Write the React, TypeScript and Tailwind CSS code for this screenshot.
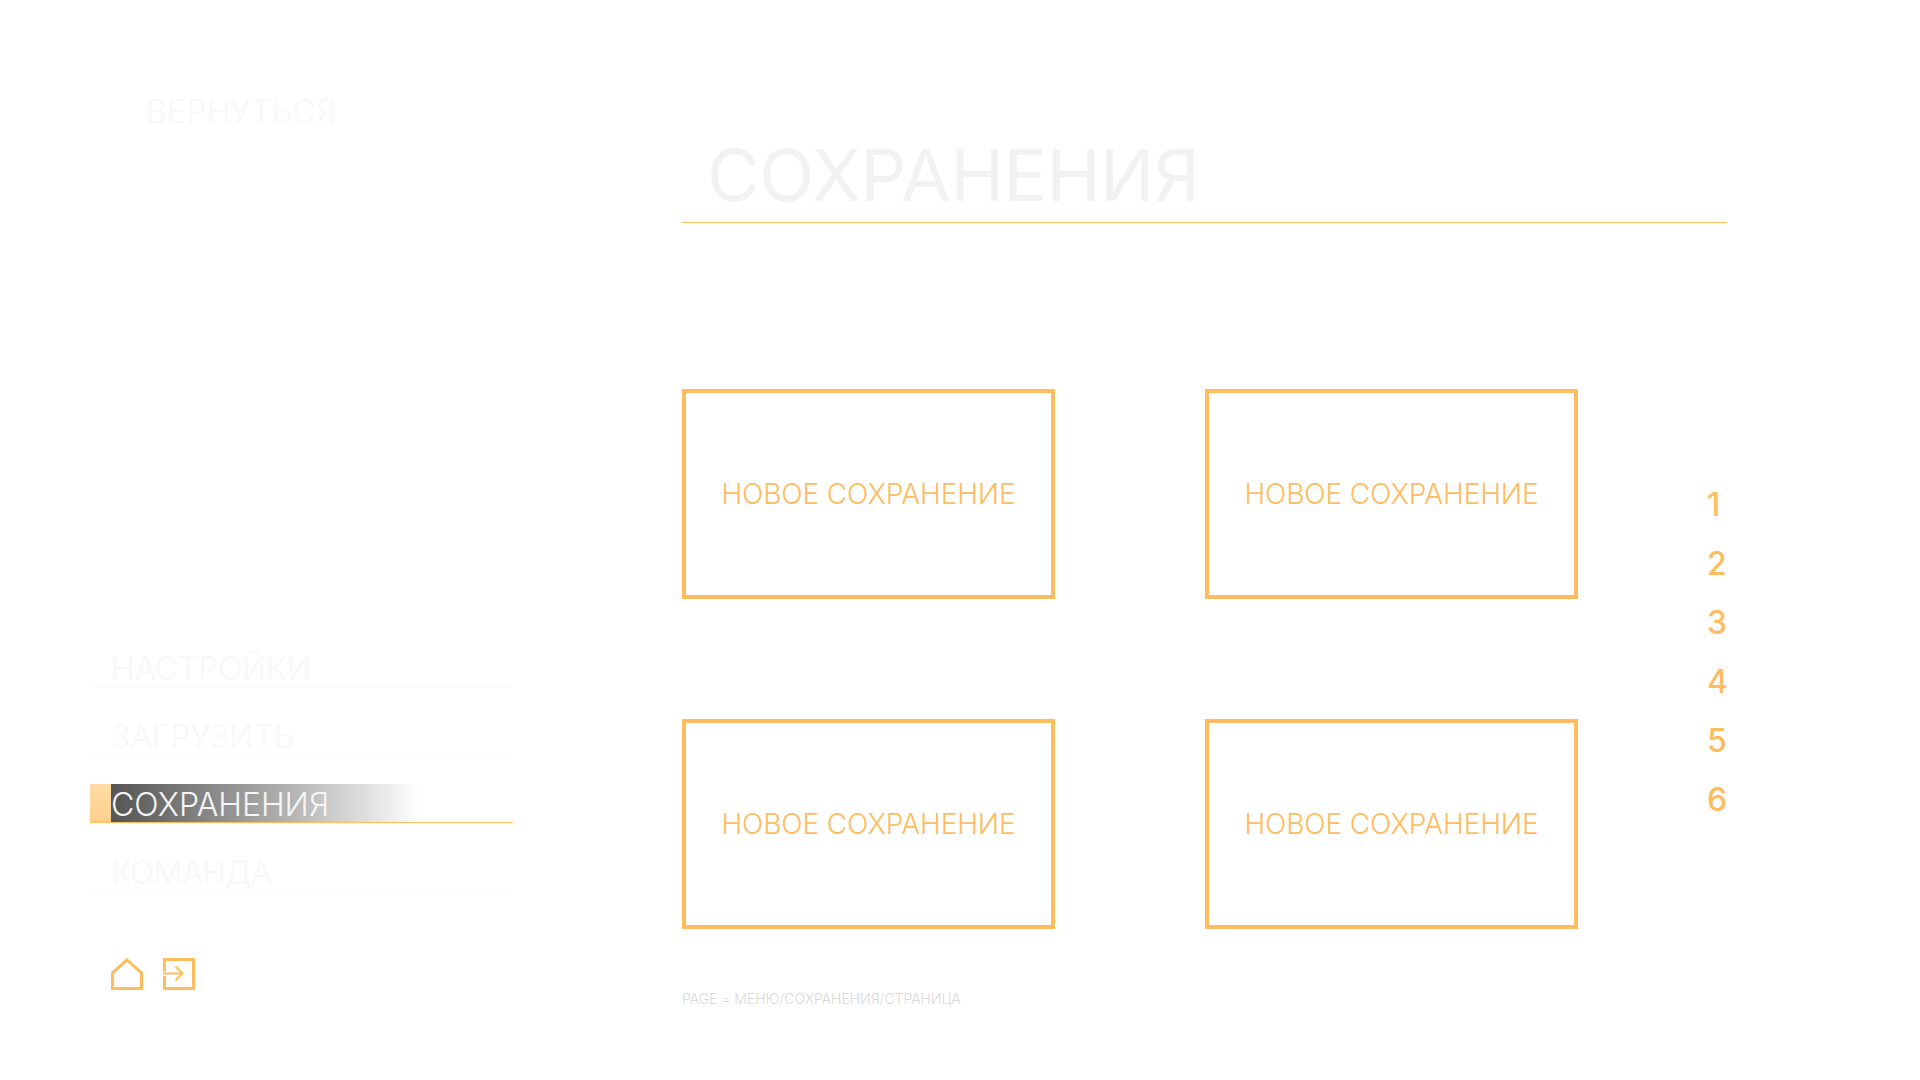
const font = { fontFamily: 'Inter, sans-serif' };

const navItems = [
  { label: 'НАСТРОЙКИ', tracking: 'tracking-[-0.2px]' },
  { label: 'ЗАГРУЗИТЬ', tracking: '' },
  { label: 'СОХРАНЕНИЯ', tracking: '' },
  { label: 'КОМАНДА', tracking: 'tracking-[-0.8px]' },
];
const pages = [1, 2, 3, 4, 5, 6];

const SaveSlot = () => (
  <div className="w-[373px] h-[210px] border-4 border-[#ffbc5e] flex items-center justify-center">
    <p className="text-[28px] tracking-[-0.1px] leading-none font-light text-[#ffbc5e]">НОВОЕ СОХРАНЕНИЕ</p>
  </div>
);

const App = () => {
  return (
    <div className="w-[1920px] h-[1080px] bg-white flex overflow-hidden font-['Inter',sans-serif]" style={font}>
      <aside className="w-[423px] ml-[90px] flex flex-col">
        <p className="mt-[92px] ml-[56px] text-[32px] tracking-[0.3px] leading-[40px] font-light text-[#f8f8f8]">ВЕРНУТЬСЯ</p>
        <nav className="mt-[487px] flex flex-col">
          {navItems.map((item) => {
            const active = item.label === 'СОХРАНЕНИЯ';
            return (
              <div
                key={item.label}
                className={`h-[68px] flex items-end border-b ${active ? 'border-[#ffbc5e]' : 'border-[#f8f8f8]'}`}
              >
                {active ? (
                  <div className="flex h-[38px] w-[330px]">
                    <div className="w-[21px] bg-gradient-to-b from-[#ffdba6] to-[#ffd08c]" />
                    <div className="flex-1 bg-gradient-to-r from-[#555555] to-white text-[32px] leading-[42px] font-light text-[#f6f6f6]">
                      {item.label}
                    </div>
                  </div>
                ) : (
                  <p className={`ml-[21px] text-[32px] leading-[34px] font-light text-[#f8f8f8] ${item.tracking}`}>
                    {item.label}
                  </p>
                )}
              </div>
            );
          })}
        </nav>
        <div className="mt-[67px] ml-[21px] flex gap-5">
          <svg width="32" height="32" viewBox="0 0 32 32" fill="none" stroke="#ffbc5e" strokeWidth="3">
            <path d="M1.5 30.5V15L16 2L30.5 15V30.5Z" />
          </svg>
          <svg width="32" height="32" viewBox="0 0 32 32" fill="none" stroke="#ffbc5e" strokeWidth="2">
            <path d="M1.5 13.5V1.5H30.5V30.5H1.5V18" strokeWidth="3" />
            <path d="M0 15.5H19M12.5 8.5L19.5 15.5L12.5 22.5" />
          </svg>
        </div>
      </aside>

      <main className="ml-[169px] w-[1045px] flex flex-col">
        <div className="h-[223px] border-b border-[#ffbc5e] flex items-end pb-[9px] pl-[25px]">
          <h1 className="text-[72px] tracking-[-0.25px] leading-[76px] font-normal text-[#f2f2f2]">СОХРАНЕНИЯ</h1>
        </div>
        <div className="mt-[166px] flex">
          <div className="grid grid-cols-[373px_373px] gap-x-[150px] gap-y-[120px]">
            <SaveSlot />
            <SaveSlot />
            <SaveSlot />
            <SaveSlot />
          </div>
          <div className="ml-[129px] mt-[96px] flex flex-col gap-[19px]">
            {pages.map((n) => (
              <span key={n} className="text-[32px] leading-[40px] font-medium text-[#ffbc5e]">
                {n}
              </span>
            ))}
          </div>
        </div>
        <p className="mt-[60px] text-[14px] tracking-[-0.03px] leading-[20px] font-light text-[#d9d9d9]">PAGE = МЕНЮ/СОХРАНЕНИЯ/СТРАНИЦА</p>
      </main>
    </div>
  );
};

export default App;
